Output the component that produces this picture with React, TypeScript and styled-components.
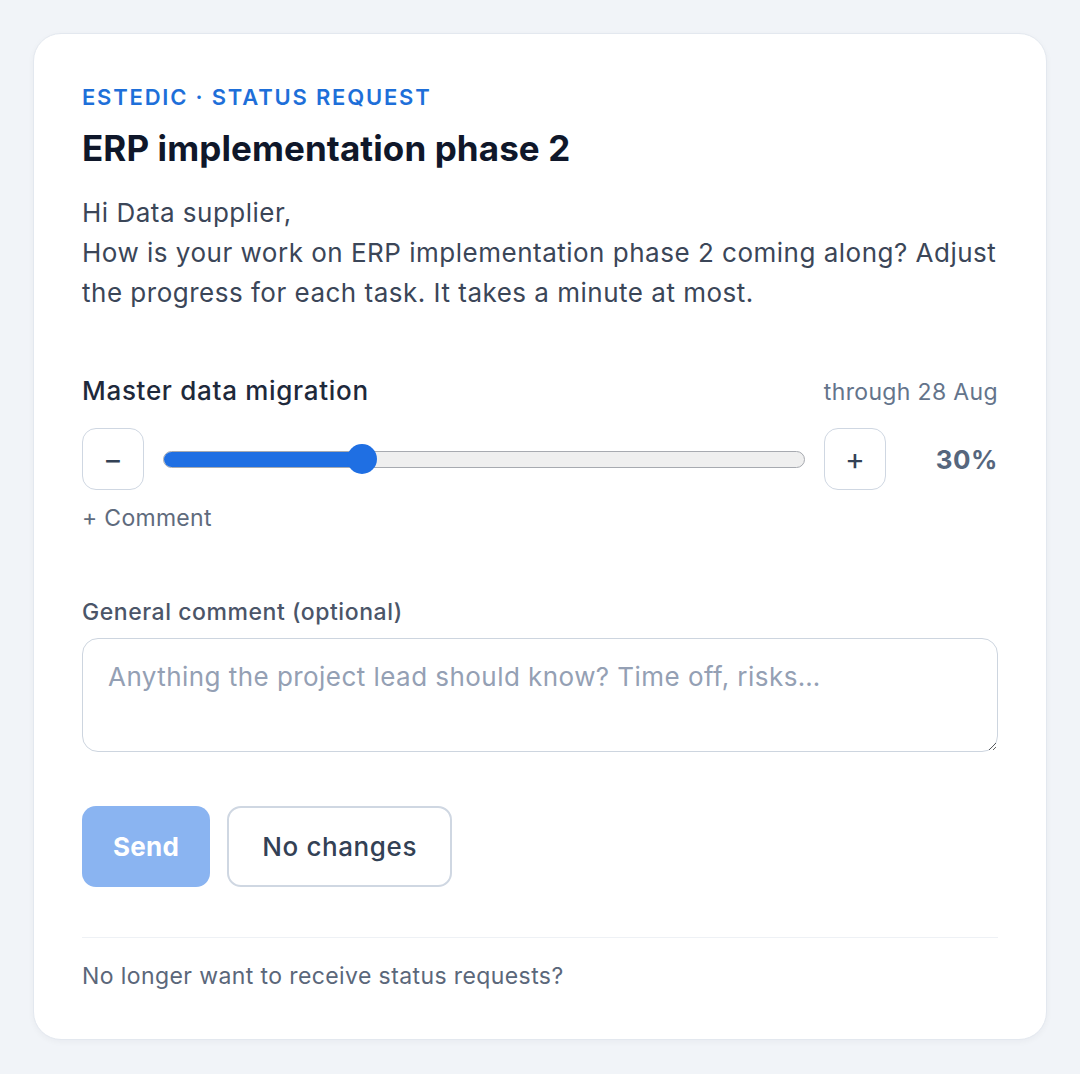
import React, { useState } from "react";
import styled, { createGlobalStyle } from "styled-components";

const GlobalStyle = createGlobalStyle`
  * { box-sizing: border-box; }
  html, body { margin: 0; padding: 0; background: #f1f4f8; }
  body {
    font-family: Inter, "Noto Sans", "Liberation Sans", sans-serif;
    -webkit-font-smoothing: antialiased;
  }
`;

const Page = styled.div`
  padding: 33px;
  min-height: 1074px;
`;

const Card = styled.main`
  background: #ffffff;
  border: 1px solid #e3e8ef;
  border-radius: 28px;
  padding: 48px;
  box-shadow: 0 2px 6px rgba(15, 23, 42, 0.04);
  display: flex;
  flex-direction: column;
`;

const Eyebrow = styled.div`
  font-size: 22px;
  line-height: 30px;
  font-weight: 600;
  letter-spacing: 1.8px;
  color: #1e6fd9;
  text-transform: uppercase;
`;

const Title = styled.h1`
  margin: 14px 0 0;
  font-size: 35px;
  line-height: 44px;
  font-weight: 700;
  color: #0f172a;
  letter-spacing: 0.1px;
`;

const Intro = styled.p`
  margin: 23px 0 0;
  font-size: 26px;
  line-height: 40px;
  letter-spacing: 0.5px;
  color: #3b4658;
`;

const Task = styled.section`
  margin-top: 60px;
  display: flex;
  flex-direction: column;
`;

const TaskHead = styled.div`
  display: flex;
  justify-content: space-between;
  align-items: baseline;
`;

const TaskName = styled.div`
  font-size: 26px;
  line-height: 36px;
  font-weight: 500;
  letter-spacing: 0.7px;
  color: #1e293b;
`;

const Due = styled.div`
  font-size: 23px;
  line-height: 30px;
  letter-spacing: 0.35px;
  color: #64748b;
`;

const Controls = styled.div`
  margin-top: 19px;
  display: flex;
  align-items: center;
  gap: 19px;
`;

const StepButton = styled.button`
  width: 62px;
  height: 62px;
  flex: none;
  border: 1.5px solid #cfd7e2;
  border-radius: 14px;
  background: #fff;
  color: #334155;
  font-family: inherit;
  font-size: 30px;
  line-height: 1;
  display: flex;
  align-items: center;
  justify-content: center;
  padding: 0;
  cursor: pointer;
`;

const Slider = styled.div`
  position: relative;
  flex: 1;
  height: 30px;
  display: flex;
  align-items: center;
`;

const Track = styled.div`
  width: 100%;
  height: 17px;
  border-radius: 9px;
  background: #efefef;
  border: 1px solid #a7aab0;
  overflow: hidden;
`;

const Fill = styled.div`
  height: 100%;
  background: #1f6fe3;
`;

const Thumb = styled.div`
  position: absolute;
  top: 0;
  width: 30px;
  height: 30px;
  margin-left: -15px;
  border-radius: 50%;
  background: #1f6fe3;
`;

const Percent = styled.div`
  width: 93px;
  flex: none;
  text-align: right;
  font-size: 26px;
  font-weight: 700;
  letter-spacing: 0.5px;
  color: #56667d;
`;

const AddComment = styled.button`
  margin-top: 13px;
  align-self: flex-start;
  border: 0;
  background: none;
  padding: 0;
  font-family: inherit;
  font-size: 23px;
  line-height: 30px;
  letter-spacing: 0.3px;
  color: #5f6b7d;
  cursor: pointer;
`;

const FieldLabel = styled.label`
  margin-top: 64px;
  font-size: 23px;
  line-height: 30px;
  font-weight: 500;
  letter-spacing: 0.55px;
  color: #4b5568;
`;

const CommentBox = styled.textarea`
  margin-top: 11px;
  width: 100%;
  height: 114px;
  border: 1.5px solid #cdd5df;
  border-radius: 16px;
  padding: 22px 25px;
  font-family: inherit;
  font-size: 26px;
  line-height: 32px;
  letter-spacing: 0.45px;
  color: #1e293b;
  resize: vertical;
  outline: none;
  &::placeholder {
    color: #94a0b4;
  }
`;

const Actions = styled.div`
  margin-top: 54px;
  display: flex;
  gap: 17px;
`;

const ActionButton = styled.button<{ primary?: boolean }>`
  height: 81px;
  padding: 0 ${({ primary }) => (primary ? "31px" : "33px")};
  border-radius: 14px;
  font-family: inherit;
  font-size: 26px;
  letter-spacing: ${({ primary }) => (primary ? "0.3px" : "0.6px")};
  font-weight: ${({ primary }) => (primary ? 700 : 500)};
  border: ${({ primary }) => (primary ? "0" : "2px solid #cfd7e2")};
  background: ${({ primary }) => (primary ? "#8ab4f1" : "#fff")};
  color: ${({ primary }) => (primary ? "#fff" : "#334155")};
  cursor: ${({ primary }) => (primary ? "default" : "pointer")};
`;

const Divider = styled.hr`
  margin: 50px 0 0;
  border: 0;
  border-top: 1.5px solid #eef1f5;
`;

const Footer = styled.div`
  margin-top: 23px;
  font-size: 23px;
  line-height: 30px;
  letter-spacing: 0.4px;
  color: #5b677a;
`;

export default function App() {
  const [progress, setProgress] = useState(30);
  const [comment, setComment] = useState("");

  const step = (d: number) =>
    setProgress((p) => Math.max(0, Math.min(100, p + d)));

  // thumb centre travels between the two track ends, inset by its radius
  const at = `calc(15px + (100% - 30px) * ${progress / 100})`;

  return (
    <Page>
      <GlobalStyle />
      <Card>
        <Eyebrow>Estedic · Status request</Eyebrow>
        <Title>ERP implementation phase 2</Title>
        <Intro>
          Hi Data supplier,
          <br />
          How is your work on ERP implementation phase 2 coming along? Adjust
          the progress for each task. It takes a minute at most.
        </Intro>

        <Task>
          <TaskHead>
            <TaskName>Master data migration</TaskName>
            <Due>through 28 Aug</Due>
          </TaskHead>
          <Controls>
            <StepButton onClick={() => step(-10)}>−</StepButton>
            <Slider>
              <Track>
                <Fill style={{ width: at }} />
              </Track>
              <Thumb style={{ left: at }} />
            </Slider>
            <StepButton onClick={() => step(10)}>+</StepButton>
            <Percent>{progress}%</Percent>
          </Controls>
          <AddComment>+ Comment</AddComment>
        </Task>

        <FieldLabel htmlFor="general">General comment (optional)</FieldLabel>
        <CommentBox
          id="general"
          value={comment}
          onChange={(e) => setComment(e.target.value)}
          placeholder="Anything the project lead should know? Time off, risks…"
        />

        <Actions>
          <ActionButton primary disabled={!comment && progress === 30}>
            Send
          </ActionButton>
          <ActionButton>No changes</ActionButton>
        </Actions>

        <Divider />
        <Footer>No longer want to receive status requests?</Footer>
      </Card>
    </Page>
  );
}
